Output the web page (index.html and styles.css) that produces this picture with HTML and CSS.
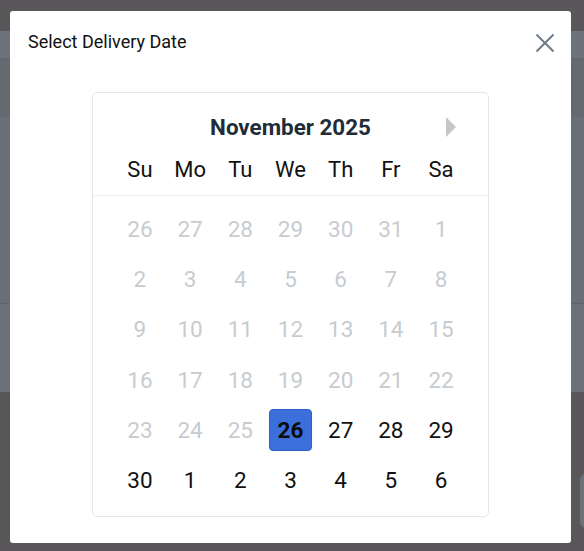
FILE: index.html
```html
<!DOCTYPE html>
<html lang="en">
<head>
<meta charset="utf-8">
<title>Select Delivery Date</title>
<link rel="stylesheet" href="styles.css">
</head>
<body>
<div class="page">
  <div class="topbar"></div>
  <div class="panel">
    <div class="band band-a"></div>
    <div class="band band-b"></div>
    <div class="band band-c"></div>
    <div class="band band-d"></div>
  </div>
  <div class="ghost-btn"></div>
</div>

<div class="modal" role="dialog" aria-label="Select Delivery Date">
  <div class="modal-header">
    <h2 class="modal-title">Select Delivery Date</h2>
    <button class="close" aria-label="Close">
      <svg width="20" height="20" viewBox="0 0 20 20"><path d="M1.5 1.5 L18.5 18.5 M18.5 1.5 L1.5 18.5" stroke="#6e7b89" stroke-width="2" fill="none"/></svg>
    </button>
  </div>
  <div class="calendar">
    <div class="cal-nav">
      <span></span>
      <div class="cal-title">November 2025</div>
      <button class="next" aria-label="Next month"><span class="tri"></span></button>
    </div>
    <div class="weekdays">
      <span>Su</span><span>Mo</span><span>Tu</span><span>We</span><span>Th</span><span>Fr</span><span>Sa</span>
    </div>
    <div class="days">
      <span class="off">26</span><span class="off">27</span><span class="off">28</span><span class="off">29</span><span class="off">30</span><span class="off">31</span><span class="off">1</span>
      <span class="off">2</span><span class="off">3</span><span class="off">4</span><span class="off">5</span><span class="off">6</span><span class="off">7</span><span class="off">8</span>
      <span class="off">9</span><span class="off">10</span><span class="off">11</span><span class="off">12</span><span class="off">13</span><span class="off">14</span><span class="off">15</span>
      <span class="off">16</span><span class="off">17</span><span class="off">18</span><span class="off">19</span><span class="off">20</span><span class="off">21</span><span class="off">22</span>
      <span class="off">23</span><span class="off">24</span><span class="off">25</span><span class="sel"><b>26</b></span><span>27</span><span>28</span><span>29</span>
      <span>30</span><span>1</span><span>2</span><span>3</span><span>4</span><span>5</span><span>6</span>
    </div>
  </div>
</div>
</body>
</html>
```
FILE: styles.css
```css
* { box-sizing: border-box; }
html, body { margin: 0; padding: 0; }
body {
  width: 584px;
  height: 551px;
  overflow: hidden;
  background: #59575a;
  font-family: Roboto, "Liberation Sans", sans-serif;
  position: relative;
}
.page { position: relative; height: 551px; }
.topbar { height: 31px; background: #59575a; }
.panel { display: flex; flex-direction: column; }
.band { background: #6b7178; }
.band-a { height: 28px; background: #6d737a; border-bottom: 1px solid #5f646b; }
.band-b { height: 58px; background: #656a71; }
.band-c { height: 187px; background: #696f76; border-bottom: 1px solid #5f646b; }
.band-d { height: 88px; background: #6b7178; }
.ghost-btn {
  position: absolute;
  left: 580px; top: 474px;
  width: 30px; height: 54px;
  border-radius: 6px;
  background: #6b7178;
}

.modal {
  position: absolute;
  left: 10px; top: 11px;
  width: 561px; height: 532px;
  background: #fff;
  border-radius: 3px;
}
.modal-header {
  display: flex;
  justify-content: space-between;
  align-items: center;
  height: 62px;
  padding: 0 16px 0 18px;
}
.modal-title {
  margin: 0;
  font-size: 18px;
  font-weight: 400;
  color: #111;
  line-height: 22px;
  margin-top: -1px;
}
.close {
  background: none;
  border: 0;
  padding: 0;
  width: 20px; height: 20px;
  margin-top: 2px;
  cursor: pointer;
}
.close svg { display: block; }

.calendar {
  width: 397px;
  margin: 19px auto 0;
  border: 1px solid #e6e7ea;
  border-radius: 5px;
  height: 425px;
}
.cal-nav {
  display: grid;
  grid-template-columns: 1fr auto 1fr;
  align-items: center;
  padding-top: 20px;
  height: 48px;
}
.cal-title {
  font-size: 22.4px;
  font-weight: 700;
  color: #1f2d3b;
  line-height: 28px;
}
.next {
  justify-self: end;
  margin-right: 32px;
  background: none;
  border: 0;
  padding: 0;
  width: 10px; height: 20px;
  display: flex;
  align-items: center;
}
.tri {
  width: 0; height: 0;
  border-top: 10px solid transparent;
  border-bottom: 10px solid transparent;
  border-left: 10px solid #c6c6c6;
}
.weekdays {
  display: grid;
  grid-template-columns: repeat(7, 50.2px);
  justify-content: center;
  margin-top: 15px;
  padding-bottom: 11px;
  border-bottom: 1px solid #eceef0;
  font-size: 22px;
  line-height: 28px;
  color: #111;
  text-align: center;
}
.days {
  display: grid;
  grid-template-columns: repeat(7, 50.2px);
  grid-auto-rows: 50.2px;
  justify-content: center;
  padding-top: 8px;
  font-size: 22.5px;
  color: #111;
  text-align: center;
}
.days span {
  display: flex;
  align-items: center;
  justify-content: center;
}
.days .off { color: #c7ccd1; }
.days .sel b {
  display: flex;
  align-items: center;
  justify-content: center;
  width: 43px; height: 42px;
  background: #3a6fdc;
  border: 1px solid #2d5fc9;
  border-radius: 4px;
  font-weight: 700;
  color: #0c0c0c;
}
```
